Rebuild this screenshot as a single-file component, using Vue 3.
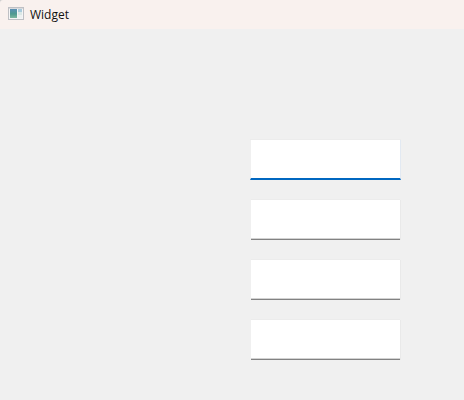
<template>
  <div class="window">
    <div class="titlebar">
      <svg class="app-icon" width="16" height="13" viewBox="0 0 16 13">
        <defs>
          <linearGradient id="panel" x1="0" y1="0" x2="0" y2="1">
            <stop offset="0" stop-color="#5b8fb4" />
            <stop offset="0.55" stop-color="#4f9a90" />
            <stop offset="1" stop-color="#7fb8a0" />
          </linearGradient>
        </defs>
        <rect x="0.5" y="0.5" width="15" height="12" fill="#f5f5f6" stroke="#bfc0c4" />
        <rect x="1" y="1" width="14" height="1" fill="#d9dadd" />
        <rect x="2" y="2" width="7" height="9" fill="url(#panel)" />
        <rect x="10" y="2" width="4" height="3" fill="#a9cbdc" />
        <rect x="10" y="5" width="4" height="3" fill="#dbe8e6" />
        <rect x="10" y="8" width="4" height="3" fill="#eef1f1" />
      </svg>
      <span class="title">Widget</span>
    </div>
    <div class="content">
      <input v-for="(field, i) in fields" :key="field" class="field" :class="{ focused: i === 0 }" type="text" />
    </div>
  </div>
</template>

<script setup>
const fields = ['first', 'second', 'third', 'fourth']
</script>

<style>
html, body {
  margin: 0;
  background: #f0f0f0;
}
</style>

<style scoped>
.window {
  width: 464px;
  height: 400px;
  display: flex;
  flex-direction: column;
  overflow: hidden;
  background: #cdcdcd;
  font-family: "Open Sans", "Noto Sans", sans-serif;
}
.titlebar {
  height: 29px;
  display: flex;
  align-items: center;
  padding-left: 8px;
  background: #f9f1ee;
  border-top-left-radius: 3px;
  flex-shrink: 0;
}
.app-icon {
  margin-right: 6px;
  margin-top: -2px;
}
.title {
  font-size: 12px;
  color: #111;
  margin-top: -1px;
}
.content {
  flex: 1;
  display: flex;
  flex-direction: column;
  align-items: flex-end;
  gap: 20px;
  padding: 111px 64px 0 0;
  background: #f0f0f0;
}
.field {
  box-sizing: border-box;
  display: block;
  width: 149px;
  height: 40px;
  margin: 0;
  padding: 0 6px;
  border: none;
  border-bottom: 1px solid #828282;
  border-radius: 0;
  outline: none;
  background: #fff;
  box-shadow: inset 0 -1px 0 #d2d2d2, 1px 0 0 #e9e9e9, 0 -1px 0 #ececec;
}
.field.focused {
  width: 151px;
  margin-right: -1px;
  border-bottom: 2px solid #0067c0;
  border-left: 1px solid #f0f0f0;
  border-right: 1px solid #e2e9f2;
  box-shadow: 0 -1px 0 #ececec;
}
</style>
